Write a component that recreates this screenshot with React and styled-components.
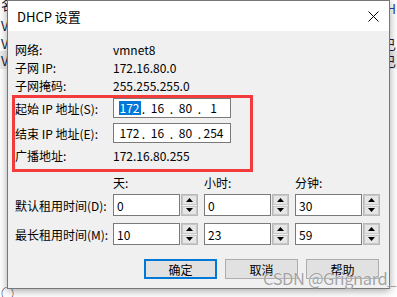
import React from 'react';
import styled, { createGlobalStyle } from 'styled-components';

const GlobalStyle = createGlobalStyle`
  html, body { margin: 0; padding: 0; background: #fff; }
  body {
    width: 397px; height: 297px; overflow: hidden;
    font-family: "Noto Sans CJK SC", "Noto Sans", sans-serif;
  }
`;

const Desktop = styled.div`
  position: relative;
  width: 397px;
  height: 297px;
  overflow: hidden;
  background: #fff;
  font-size: 12px;
  color: #000;
`;

/* window behind the dialog */
const BackWindow = styled.div`
  display: flex;
  flex-direction: column;
  height: 297px;
  font-size: 13px;
  color: #1b1b3a;
`;

const BackRow = styled.div`
  display: flex;
  justify-content: space-between;
  align-items: center;
  height: ${p => p.$h}px;
  padding: 0 1px;
  background: ${p => p.$bg || 'transparent'};
  line-height: 1;
`;

const Spacer = styled.div`
  flex: 1;
`;

const Dialog = styled.div`
  position: absolute;
  left: 7px;
  top: 0;
  width: 381px;
  height: 287px;
  border: 1px solid #777;
  box-shadow: 0 2px 8px rgba(0, 0, 0, 0.35);
  background: #f0f0f0;
  display: flex;
  flex-direction: column;
`;

const TitleBar = styled.div`
  height: 30px;
  background: #fff;
  display: flex;
  align-items: center;
  justify-content: space-between;
  padding-left: 9px;
  font-size: 13px;
  flex-shrink: 0;
`;

const CloseBtn = styled.div`
  width: 30px;
  height: 30px;
  margin-right: 1px;
  display: flex;
  align-items: center;
  justify-content: center;
`;

const Body = styled.div`
  padding: 9px 7px 0 7px;
  display: flex;
  flex-direction: column;
`;

const InfoRow = styled.div`
  display: grid;
  grid-template-columns: 98px 1fr;
  height: 18px;
  align-items: center;
`;

const Frame = styled.div`
  margin: 1px 0 0 -3px;
  width: 235px;
  border: 3px solid #f43b3b;
  padding-bottom: 5px;
  display: flex;
  flex-direction: column;
`;

const FrameRow = styled.div`
  display: grid;
  grid-template-columns: 98px 118px;
  height: ${p => p.$h}px;
  margin-top: ${p => p.$mt || 0}px;
  align-items: center;
`;

const IpBox = styled.div`
  box-sizing: border-box;
  height: 20px;
  border: 1px solid #7a7a7a;
  background: #fff;
  display: flex;
  align-items: center;
  padding-left: 5px;
`;

const Octet = styled.span`
  width: 21px;
  display: flex;
  justify-content: center;
`;

const Dot = styled.span`
  width: 7px;
  text-align: center;
`;

const Sel = styled.span`
  background: ${p => (p.$on ? '#0078d7' : 'transparent')};
  color: ${p => (p.$on ? '#fff' : '#000')};
  padding: 0 1px;
  line-height: 14px;
`;

const SpinHead = styled.div`
  display: grid;
  grid-template-columns: 98px repeat(3, 91px);
  height: 18px;
  margin-top: 1px;
  align-items: center;
`;

const SpinRow = styled.div`
  display: grid;
  grid-template-columns: 98px repeat(3, 91px);
  height: 22px;
  margin-top: ${p => p.$mt}px;
  align-items: center;
`;

const Spin = styled.div`
  display: flex;
  width: 85px;
  height: 22px;
  gap: 1px;
`;

const SpinInput = styled.div`
  box-sizing: border-box;
  width: 67px;
  height: 22px;
  border: 1px solid #7a7a7a;
  background: #fff;
  padding-left: 3px;
  display: flex;
  align-items: center;
`;

const SpinBtns = styled.div`
  box-sizing: border-box;
  width: 17px;
  height: 22px;
  border: 1px solid #b9b9b9;
  display: flex;
  flex-direction: column;
  gap: 1px;
`;

const SpinBtn = styled.div`
  flex: 1;
  background: #e6e6e6;
  border: 1px solid #c8c8c8;
  display: flex;
  align-items: center;
  justify-content: center;
`;

const ButtonBar = styled.div`
  display: flex;
  justify-content: flex-end;
  gap: 8px;
  margin-top: 14px;
  padding-right: 3px;
`;

const Button = styled.div`
  box-sizing: border-box;
  width: 73px;
  height: 20px;
  background: #e1e1e1;
  border: ${p => (p.$primary ? '2px solid #0078d7' : '1px solid #adadad')};
  display: flex;
  align-items: center;
  justify-content: center;
  font-size: 12px;
`;

const Watermark = styled.div`
  position: absolute;
  left: 263px;
  top: 267px;
  font-family: "Noto Sans CJK SC", "Noto Sans", sans-serif;
  font-size: 16.5px;
  line-height: 22px;
  letter-spacing: -0.4px;
  color: rgba(145, 145, 145, 0.85);
  text-shadow: 0 0 1px rgba(255, 255, 255, 0.9);
  white-space: nowrap;
  pointer-events: none;
`;

const Arrow = ({ up }) => (
  <svg width="7" height="4" viewBox="0 0 7 4">
    <polygon points={up ? '3.5,0 7,4 0,4' : '0,0 7,0 3.5,4'} fill="#000" />
  </svg>
);

const SpinBox = ({ value }) => (
  <Spin>
    <SpinInput>{value}</SpinInput>
    <SpinBtns>
      <SpinBtn><Arrow up /></SpinBtn>
      <SpinBtn><Arrow /></SpinBtn>
    </SpinBtns>
  </Spin>
);

const Ip = ({ parts, selected }) => (
  <IpBox>
    {parts.map((p, i) => (
      <React.Fragment key={i}>
        {i > 0 && <Dot>.</Dot>}
        <Octet><Sel $on={selected && i === 0}>{p}</Sel></Octet>
      </React.Fragment>
    ))}
  </IpBox>
);

export default function App() {
  return (
    <Desktop>
      <GlobalStyle />
      <BackWindow>
        <BackRow $h={16}><span style={{ marginTop: -8 }}>名</span><span style={{ color: '#2a3aa0' }}>H</span></BackRow>
        <BackRow $h={19}><span>V</span><span /></BackRow>
        <BackRow $h={16}><span>V</span><span>已</span></BackRow>
        <BackRow $h={18} $bg="#ececec"><span>V</span><span>已</span></BackRow>
        <Spacer />
        <BackRow $h={10}><span>○</span><span /></BackRow>
      </BackWindow>

      <Dialog>
        <TitleBar>
          <span>DHCP 设置</span>
          <CloseBtn>
            <svg width="11" height="11" viewBox="0 0 11 11">
              <path d="M0.5 0.5 L10.5 10.5 M10.5 0.5 L0.5 10.5" stroke="#000" strokeWidth="1" />
            </svg>
          </CloseBtn>
        </TitleBar>
        <Body>
          <InfoRow><span>网络:</span><span>vmnet8</span></InfoRow>
          <InfoRow><span>子网 IP:</span><span>172.16.80.0</span></InfoRow>
          <InfoRow><span>子网掩码:</span><span>255.255.255.0</span></InfoRow>
          <Frame>
            <FrameRow $h={20}><span>起始 IP 地址(S):</span><Ip parts={['172', '16', '80', '1']} selected /></FrameRow>
            <FrameRow $h={20} $mt={5}><span>结束 IP 地址(E):</span><Ip parts={['172', '16', '80', '254']} /></FrameRow>
            <FrameRow $h={18} $mt={3}><span>广播地址:</span><span>172.16.80.255</span></FrameRow>
          </Frame>
          <SpinHead><span /><span>天:</span><span>小时:</span><span>分钟:</span></SpinHead>
          <SpinRow $mt={3}>
            <span>默认租用时间(D):</span>
            <SpinBox value="0" /><SpinBox value="0" /><SpinBox value="30" />
          </SpinRow>
          <SpinRow $mt={7}>
            <span>最长租用时间(M):</span>
            <SpinBox value="10" /><SpinBox value="23" /><SpinBox value="59" />
          </SpinRow>
          <ButtonBar>
            <Button $primary>确定</Button>
            <Button>取消</Button>
            <Button>帮助</Button>
          </ButtonBar>
        </Body>
      </Dialog>
      <Watermark>CSDN @Grignard_</Watermark>
    </Desktop>
  );
}
